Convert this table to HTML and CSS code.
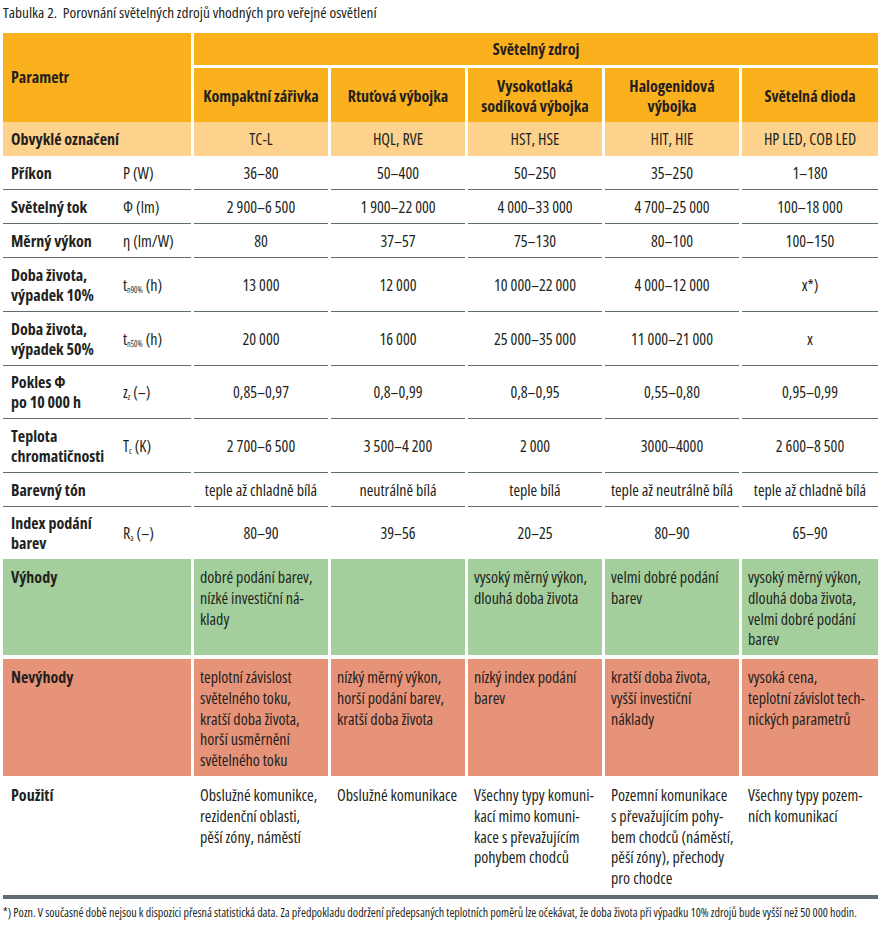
FILE: index.html
```html
<!DOCTYPE html>
<html lang="cs">
<head>
<meta charset="utf-8">
<title>Tabulka 2</title>
<link rel="stylesheet" href="styles.css">
</head>
<body>
<div class="title">Tabulka 2.&nbsp; Porovnání světelných zdrojů vhodných pro veřejné osvětlení</div>
<div class="grid">
  <div class="c hd param-head">Parametr</div>
  <div class="c hd zdroj">Světelný zdroj</div>

  <div class="c hd h2">Kompaktní zářivka</div>
  <div class="c hd h2">Rtuťová výbojka</div>
  <div class="c hd h2">Vysokotlaká<br>sodíková výbojka</div>
  <div class="c hd h2">Halogenidová<br>výbojka</div>
  <div class="c hd h2">Světelná dioda</div>

  <div class="c lo p"><b>Obvyklé označení</b></div>
  <div class="c lo v">TC-L</div>
  <div class="c lo v">HQL, RVE</div>
  <div class="c lo v">HST, HSE</div>
  <div class="c lo v">HIT, HIE</div>
  <div class="c lo v">HP LED, COB LED</div>

  <div class="c wl p"><b>Příkon</b><span class="u">P (W)</span></div>
  <div class="c wl v">36–80</div>
  <div class="c wl v">50–400</div>
  <div class="c wl v">50–250</div>
  <div class="c wl v">35–250</div>
  <div class="c wl v">1–180</div>

  <div class="c wl p"><b>Světelný tok</b><span class="u">Φ (lm)</span></div>
  <div class="c wl v">2 900–6 500</div>
  <div class="c wl v">1 900–22 000</div>
  <div class="c wl v">4 000–33 000</div>
  <div class="c wl v">4 700–25 000</div>
  <div class="c wl v">100–18 000</div>

  <div class="c wl p"><b>Měrný výkon</b><span class="u">η (lm/W)</span></div>
  <div class="c wl v">80</div>
  <div class="c wl v">37–57</div>
  <div class="c wl v">75–130</div>
  <div class="c wl v">80–100</div>
  <div class="c wl v">100–150</div>

  <div class="c wl p"><b>Doba života,<br>výpadek 10%</b><span class="u">t<sub>n90%</sub> (h)</span></div>
  <div class="c wl v">13 000</div>
  <div class="c wl v">12 000</div>
  <div class="c wl v">10 000–22 000</div>
  <div class="c wl v">4 000–12 000</div>
  <div class="c wl v">x*)</div>

  <div class="c wl p"><b>Doba života,<br>výpadek 50%</b><span class="u">t<sub>n50%</sub> (h)</span></div>
  <div class="c wl v">20 000</div>
  <div class="c wl v">16 000</div>
  <div class="c wl v">25 000–35 000</div>
  <div class="c wl v">11 000–21 000</div>
  <div class="c wl v">x</div>

  <div class="c wl p"><b>Pokles Φ<br>po 10 000 h</b><span class="u">z<sub>z</sub> (–)</span></div>
  <div class="c wl v">0,85–0,97</div>
  <div class="c wl v">0,8–0,99</div>
  <div class="c wl v">0,8–0,95</div>
  <div class="c wl v">0,55–0,80</div>
  <div class="c wl v">0,95–0,99</div>

  <div class="c wl p"><b>Teplota<br>chromatičnosti</b><span class="u">T<sub>c</sub> (K)</span></div>
  <div class="c wl v">2 700–6 500</div>
  <div class="c wl v">3 500–4 200</div>
  <div class="c wl v">2 000</div>
  <div class="c wl v">3000–4000</div>
  <div class="c wl v">2 600–8 500</div>

  <div class="c wl p"><b>Barevný tón</b><span class="u"></span></div>
  <div class="c wl v">teple až chladně bílá</div>
  <div class="c wl v">neutrálně bílá</div>
  <div class="c wl v">teple bílá</div>
  <div class="c wl v">teple až neutrálně bílá</div>
  <div class="c wl v">teple až chladně bílá</div>

  <div class="c p"><b>Index podání<br>barev</b><span class="u">R<sub>a</sub> (–)</span></div>
  <div class="c v">80–90</div>
  <div class="c v">39–56</div>
  <div class="c v">20–25</div>
  <div class="c v">80–90</div>
  <div class="c v">65–90</div>

  <div class="c gr t first"><b>Výhody</b></div>
  <div class="c gr t">dobré podání barev,<br>nízké investiční ná-<br>klady</div>
  <div class="c gr t"></div>
  <div class="c gr t">vysoký měrný výkon,<br>dlouhá doba života</div>
  <div class="c gr t">velmi dobré podání<br>barev</div>
  <div class="c gr t">vysoký měrný výkon,<br>dlouhá doba života,<br>velmi dobré podání<br>barev</div>

  <div class="c rd t first"><b>Nevýhody</b></div>
  <div class="c rd t">teplotní závislost<br>světelného toku,<br>kratší doba života,<br>horší usměrnění<br>světelného toku</div>
  <div class="c rd t">nízký měrný výkon,<br>horší podání barev,<br>kratší doba života</div>
  <div class="c rd t">nízký index podání<br>barev</div>
  <div class="c rd t">kratší doba života,<br>vyšší investiční<br>náklady</div>
  <div class="c rd t">vysoká cena,<br>teplotní závislot tech-<br>nických parametrů</div>

  <div class="c t first"><b>Použití</b></div>
  <div class="c t">Obslužné komunikce,<br>rezidenční oblasti,<br>pěší zóny, náměstí</div>
  <div class="c t">Obslužné komunikace</div>
  <div class="c t">Všechny typy komuni-<br>kací mimo komuni-<br>kace s převažujícím<br>pohybem chodců</div>
  <div class="c t">Pozemní komunikace<br>s převažujícím pohy-<br>bem chodců (náměstí,<br>pěší zóny), přechody<br>pro chodce</div>
  <div class="c t">Všechny typy pozem-<br>ních komunikací</div>
</div>
<div class="bar"></div>
<div class="note">*) Pozn. V současné době nejsou k dispozici přesná statistická data. Za předpokladu dodržení předepsaných teplotních poměrů lze očekávat, že doba života při výpadku 10% zdrojů bude vyšší než 50 000 hodin.</div>
</body>
</html>
```

FILE: styles.css
```css
html, body {
  margin: 0;
  background: #ffffff;
}
body {
  padding: 0 3px;
  font-family: "Open Sans", "Roboto", sans-serif;
  font-stretch: 80%;
  font-weight: 480;
  color: #231f20;
  font-size: 16px;
}
b {
  font-weight: 700;
}
.title {
  height: 33px;
  padding-top: 2px;
  box-sizing: border-box;
  font-size: 15.3px;
  line-height: 20px;
  font-weight: 400;
}
.grid {
  display: grid;
  width: 875px;
  grid-template-columns: 188px 134px 134px 134px 134px 136px;
  grid-template-rows: 35px 54px 34px 34px 34px 34px 54px 54px 53px 54px 34px 52px 100px 118px 118px;
  column-gap: 3px;
}
.c {
  box-sizing: border-box;
  line-height: 20px;
  white-space: nowrap;
  overflow: hidden;
}
.hd {
  background: #fbb01d;
  font-weight: 700;
}
.param-head {
  grid-row: span 2;
  display: flex;
  align-items: center;
  padding-left: 8px;
  padding-bottom: 2px;
}
.zdroj {
  grid-column: span 5;
  border-bottom: 3px solid #ffffff;
  display: flex;
  align-items: center;
  justify-content: center;
}
.h2 {
  display: flex;
  align-items: center;
  justify-content: center;
  text-align: center;
  padding-top: 2px;
}
.lo {
  background: #fdd28c;
}
.wl {
  border-bottom: 1px solid #5f6e73;
}
.p {
  display: flex;
  align-items: center;
  padding-left: 8px;
}
.p b {
  width: 112px;
  flex: none;
}
.u {
  flex: 1;
}
sub {
  font-size: 8px;
  vertical-align: -2px;
  line-height: 0;
}
.v {
  display: flex;
  align-items: center;
  justify-content: center;
  text-align: center;
}
.t {
  padding: 8px 6px 0 6px;
  line-height: 20.8px;
}
.t.first {
  padding-left: 8px;
}
.gr {
  background: #a4cf9d;
  border-bottom: 4px solid #ffffff;
}
.rd {
  background: #e79379;
  border-bottom: 1px solid #ffffff;
}
.bar {
  width: 875px;
  height: 4px;
  background: #5f6e73;
}
.note {
  font-size: 12px;
  font-weight: 400;
  line-height: 14px;
  padding-top: 7px;
  white-space: nowrap;
}
```
